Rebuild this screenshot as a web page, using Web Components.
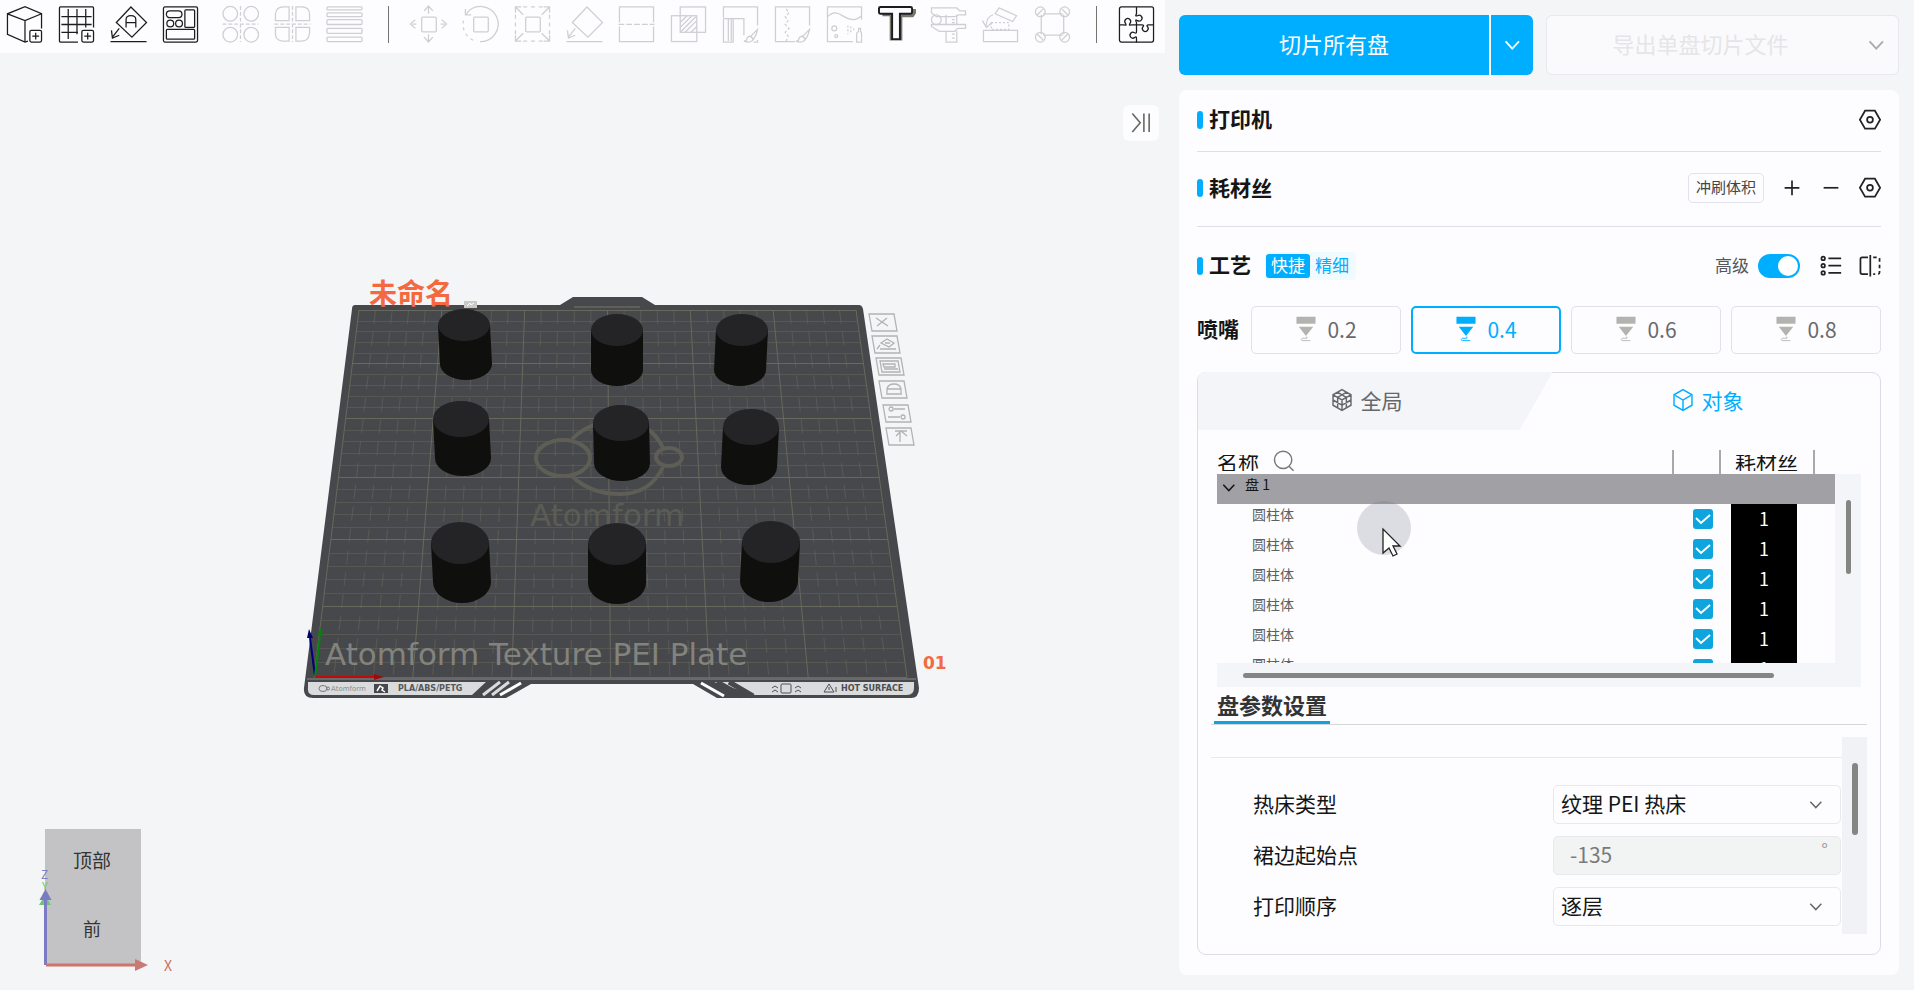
<!DOCTYPE html>
<html lang="zh-CN">
<head>
<meta charset="utf-8">
<title>切片</title>
<style>
html,body{margin:0;height:100%}
body{background:#f3f5f7;font-family:"Noto Sans CJK SC","Noto Sans",sans-serif;color:#151515;overflow:hidden}
</style>
</head>
<body>
<slicer-app></slicer-app>
<script>
const def=(name,html,init)=>{
  const t=document.createElement('template');
  t.innerHTML='<style>*{box-sizing:border-box}button,input,select{font:inherit;color:inherit;margin:0}button{cursor:pointer}</style>'+html;
  customElements.define(name,class extends HTMLElement{
    constructor(){super();this.attachShadow({mode:'open'}).append(t.content.cloneNode(true));}
    connectedCallback(){if(init&&!this.ready){this.ready=true;init.call(this,this.shadowRoot);}}
  });
};

const brush='<path d="M36 24l-7 7 3 3q3-4 4-10ZM28 31q-3 1-3 3t-3 2q5 2 8 0 2-1 1-3Z"/>';
const icons={
 cube:'<path d="M22 36 19 37 1 29V8L19 .8 36 8v15M1 8l18 7 17-7M19 15v22"/><rect x="24" y="25" width="12" height="12" rx="1.5"/><path d="M30 27.500v7M26.500 31h7"/>',
 grid:'<path d="M20 37H2a1 1 0 0 1-1-1V2a1 1 0 0 1 1-1h33a1 1 0 0 1 1 1v20M10 3v31M19 3v26M28 3v19M3 11h31M3 19h31M3 27h17"/><rect x="24" y="25" width="12" height="12" rx="1.5"/><path d="M30 27.500v7M26.500 31h7"/>',
 orient:'<path d="M21 1 37 17 22 32 6 17ZM9 23 2 32M1 25l1 8 7-3M0 36.500h37"/><path d="M16 22v-8q0-4 5-4t5 4v8M16 17h10" />',
 arrange:'<rect x="1" y="1" width="35" height="36" rx="1.500"/><rect x="4" y="5" width="16" height="7" rx="3.500"/><rect x="23" y="4" width="10" height="18" rx="1"/><circle cx="8" cy="18" r="3.500"/><circle cx="17" cy="18" r="3.500"/><rect x="4" y="24" width="29" height="10" rx="1"/>',
 circles:'<circle cx="8" cy="8" r="7.500"/><circle cx="29.500" cy="8" r="7.500"/><circle cx="8" cy="29.500" r="7.500"/><circle cx="29.500" cy="29.500" r="7.500"/><path d="M18.500 0v37M0 18.500h37" stroke-dasharray="4 2"/>',
 quads:'<path d="M1 15V8q1-7 8-7h6v14ZM22 1h6q8 0 8 8v6H22ZM1 22h14v14H8q-7-1-7-7ZM22 22h14v6q-1 8-8 8h-6Z"/><path d="M18.500 0v37M0 18.500h37" stroke-dasharray="4 2"/>',
 layers:'<rect x=".5" y="1" width="36" height="3" rx="1"/><rect x=".5" y="7" width="36" height="4" rx="1"/><rect x=".5" y="14" width="36" height="5" rx="1"/><rect x=".5" y="23" width="36" height="5" rx="1"/><rect x=".5" y="32" width="36" height="4.500" rx="1"/>',
 move:'<rect x="11.500" y="11.500" width="15" height="15" rx="1"/><path d="M18.500 1v7M14 5l4.500-5L23 5M18.500 29v7M14 32l4.500 5 4.500-5M5 14l-5 4.500L5 23M32 14l5 4.500-5 4.500M2 18.500h4M31 18.500h4"/>',
 rotate:'<rect x="11.500" y="11.500" width="15" height="15" rx="1"/><path d="M4 8a18 18 0 1 1 14 28.500M3 3v6h6"/><path d="M1 15a18 18 0 0 0 12 21" stroke-dasharray="3 4"/>',
 scale:'<rect x="11.500" y="11.500" width="15" height="15" rx="1"/><path d="M1 7V1h6M30 1h6v6M1 30v6h6M30 36h6v-6M1 1l8 8M36 1l-8 8M1 36l8-8M36 36l-8-8"/><path d="M9 1h20M9 36h20M1 9v20M36 9v20" stroke-dasharray="4 4"/>',
 lay:'<path d="M21 1 37 17 22 32 6 17ZM9 23 2 32M1 25l1 8 7-3M0 36.500h37"/>',
 cut:'<path d="M1 17V1h35v16M1 21v15.500h35V21"/><path d="M0 18.800h37" stroke-dasharray="6 2"/>',
 bool:'<rect x="10" y="1" width="26" height="26"/><rect x="1" y="10" width="26" height="26.500"/><path d="m10 17 7-7M10 22 22 10M10 27l16-16M15 27l12-12M21 27l6-6"/>',
 support:'<path d="M36 20V1H1v11M1 13h21v17M1 13v24h10V13M6 13v23M9 13v23M36 35v2h-4"/>'+brush,
 seam:'<path d="M36 20V1H1v35.500h20"/><path d="m12 3 3 4-4 4 3 4-3 4 4 4-4 4 3 4-2 5" stroke-dasharray="3 2"/>'+brush,
 paint:'<path d="M36 14V1H1v35.500h26M1 11c8-8 13-2 19 1s12 2 16-2"/><circle cx="8" cy="23" r="2.500"/><circle cx="10" cy="31" r="1.500"/><path d="M31 37V28l2-2v-3h2v3l1 2v9Z"/><path d="M22 20v9M25 21v7M28 23v3" stroke-dasharray="2 2"/>',
 text:'<path d="M4 9H13v25h10V10h12l2-3V3" stroke="#77776c" stroke-width="3" fill="none"/><path d="M2 1h31q1.500 0 1.500 1.500V6Q34.500 8 33 8H22v26H14V8H2Q.5 8 .5 6V2.500Q.5 1 2 1Z" fill="#fdfdff" stroke-width="2"/>',
 measure:'<path d="M1 2h26l3 3h6v4h-7l-4 2H6L1 7ZM1 19h35v4h-8l-3 3H9l-8-5ZM16 9v10M27 9v10M16 26v11h11V26M22 11h3M22 14h3M22 17h3M22 29h3M22 33h3"/><circle cx="6" cy="14" r="5"/>',
 assemble:'<path d="M1 25h35v11.500H1ZM17 2l18 8-4 6-18-8ZM11 9Q4 11 4 20M0 15l4 7 6-5"/><path d="M9 17h18v7H9Z" stroke-dasharray="2 2"/>',
 ears:'<path d="M7 9v20M30 9v20M9 8h20M9 30h20"/><circle cx="6" cy="6" r="5"/><circle cx="31" cy="6" r="5"/><circle cx="6" cy="32" r="5"/><circle cx="31" cy="32" r="5"/><path d="m3 9 6-6M28 3l6 6M3 29l6 6M28 35l6-6"/>',
 puzzle:'<rect x="1" y="1" width="35" height="36" rx="2"/><path d="M18.500 1v7q-2 3 1 2a3 3 0 1 1 0 5q-3-2-1 2v3M1 19.500h5q3 1 1-2a3 3 0 1 1 5 0q-2 3 1 2h11q3 0 1 2a3 3 0 1 0 5 0q-2-2 1-2h5M18.500 19.500v7q0 2-2 1a3 3 0 1 0 0 5q2-2 2 1v4"/>',
 chev:'<path d="m3 10 15 16 15-16" stroke-width="4"/>',
 hex:'<path d="M10 3h17l9 15.500L27 34H10L1 18.500Z" stroke-width="3"/><circle cx="18.500" cy="18.500" r="5" stroke-width="3"/>',
 plus:'<path d="M18.500 1v35M1 18.500h35" stroke-width="4"/>',
 minus:'<path d="M1 18.500h35" stroke-width="4"/>',
 list:'<g stroke-width="3"><circle cx="5" cy="6" r="3"/><circle cx="5" cy="18.500" r="3"/><circle cx="5" cy="31" r="3"/><path d="M14 6h22M14 18.500h22M14 31h22"/></g>',
 compare:'<g stroke-width="3"><path d="M15 4H5Q2 4 2 7v23q0 3 3 3h10M19 0v37"/><path d="M24 4h8q3 0 3 3v23q0 3-3 3h-8" stroke-dasharray="6 5"/></g>',
 boxes:'<path d="M18.500 1 34 10v18l-15.500 9L3 28V10ZM3 10l15.500 9L34 10M18.500 19v18M3 19l15.500 9L34 19M10.500 5.500 26 14.500V32M26.500 5.500 11 14.500V32" stroke-width="2.500"/>',
 box:'<path d="M18.500 1 34 10v18l-15.500 9L3 28V10ZM5 11l13.500 8L32 11M18.500 19v17" stroke-width="2.500"/>',
 search:'<circle cx="17" cy="17" r="15" stroke-width="2.500"/><path d="m27 28 8 8" stroke-width="2.500"/>',
 collapse:'<path d="m2 1 15 17.500L2 36M24 1v35M34 1v35" stroke-width="3"/>',
 nozzle:'<path d="M2-2h33v12H2ZM6 15h25L18.500 31Z" fill="currentColor" stroke="none"/><path d="M20 32v3h-8q-4 3 0 4h14" stroke-width="1.500"/>'
};
customElements.define('ui-icon',class extends HTMLElement{
  constructor(){super();this.attachShadow({mode:'open'});}
  connectedCallback(){
    const s=this.getAttribute('size')||37;
    this.shadowRoot.innerHTML=`<style>:host{display:block;width:${s}px;height:${s}px;flex:none}svg{display:block;overflow:visible}</style><svg width="${s}" height="${s}" viewBox="0 0 37 38" fill="none" stroke="currentColor" stroke-width="1.3" aria-hidden="true">${icons[this.getAttribute('name')]}</svg>`;
  }
});

def('tool-bar',`<style>
:host{display:flex;align-items:center;gap:15px;height:53px;padding:0 10px 4px 6px;background:#fdfdff;position:relative}
button{border:0;background:none;padding:0;width:37px;height:37px;color:#1c1d1f}
button:disabled{color:#cfcfd3;cursor:default}
i{width:1px;height:37px;background:#73736f;margin:0 6px 0 10px}
.g{margin-left:8px}
</style>`,function(r){
  [['cube','添加'],['grid','添加盘'],['orient','朝向'],['arrange','排列'],['circles','拆分对象',1,1],['quads','拆分零件',1],['layers','层高',1],0,['move','移动',1],['rotate','旋转',1],['scale','缩放',1],['lay','放平',1],['cut','剪切',1],['bool','布尔',1],['support','支撑',1],['seam','接缝',1],['paint','上色',1],['text','文字'],['measure','测量',1],['assemble','装配',1],['ears','耳',1],0,['puzzle','拼装']].forEach(x=>{
    if(!x){r.append(document.createElement('i'));return;}
    const b=document.createElement('button');b.type='button';b.setAttribute('aria-label',x[1]);b.disabled=!!x[2];if(x[3])b.className='g';
    b.innerHTML=`<ui-icon name="${x[0]}"></ui-icon>`;r.append(b);
  });
});

def('plate-scene',`<style>
:host{display:block}
svg{display:block;overflow:visible}
.w{font-family:"DejaVu Sans",sans-serif}
</style>
<svg width="1165" height="990" viewBox="0 0 1165 990" role="img">
<path d="M355 305H560L573 297H642L655 305H859Q862 305 863 309L919 688Q919 698 911 698H717L693 684H531L506 698H313Q303 698 304 688L352 309Q352 305 355 305Z" fill="#47484b"/>
<path d="M574 307h66" stroke="#77776a"/>
<g id="grid" fill="none" stroke="#6b6b5e"></g>
<g fill="none" stroke="#5e5e57" stroke-width="4"><ellipse cx="563" cy="458" rx="27" ry="18"/><ellipse cx="669" cy="457" rx="13" ry="9"/><path d="M572 439Q590 421 620 421T663 448M663 467Q650 494 620 494T572 476"/></g>
<text class="w" x="530" y="526" font-size="31" fill="#5c5c56">Atomform</text>
<text class="w" x="325" y="665" font-size="31" fill="#83837e">Atomform Texture PEI Plate</text>
<g id="cyl"></g>
<path d="M307 679H916" stroke="#8b8b87"/>
<path d="M308 682H486L472 695H314Q307 695 308 687ZM714 682H914V688Q914 695 907 695H755Z" fill="#d9dbdc"/>
<path d="M479 696 499 682M488 696 508 682M497 696 517 682M502 696 525 682" stroke="#47484b" stroke-width="3"/>
<path d="M483 695 500 682M492 695 509 682" stroke="#d9dbdc" stroke-width="3"/><path d="M500 695 521 683" stroke="#fff" stroke-width="3"/>
<path d="M717 682 742 696M729 682 753 696" stroke="#47484b" stroke-width="5"/><path d="M701 683 724 696" stroke="#fff" stroke-width="3"/>
<g fill="none" stroke="#77797a"><ellipse cx="323" cy="688.500" rx="4" ry="3"/><circle cx="328" cy="688.500" r="1.500"/></g>
<text class="w" x="331" y="691" font-size="7" fill="#8b8d8e">Atomform</text>
<path d="M374 684h14v9h-14Z" fill="#47484b"/><path d="m377 691 3-5 3 2-1 2 3 2" stroke="#fff" stroke-width="1.500" fill="none"/>
<text class="w" x="398" y="691" font-size="8" font-weight="700" fill="#56585a">PLA/ABS/PETG</text>
<g fill="none" stroke="#4e5052"><rect x="781" y="684" width="10" height="9" rx="1"/><path d="m772 688 3-2 3 2M772 692l3-2 3 2M795 688l3-2 3 2M795 692l3-2 3 2M824 692l5-8 5 8ZM829 687v3M836 687v5"/></g>
<text class="w" x="841" y="691" font-size="8" font-weight="700" fill="#4b4d4f">HOT SURFACE</text>
<g stroke-width="2"><path d="M315 676 310 638" stroke="#00007c"/><path d="M315 676 320 637" stroke="#00850a"/><path d="M315 677H375" stroke="#c20a0a"/></g>
<path d="m309 629 4 9h-6Z" fill="#00006a"/><path d="m321 627 2 9h-6Z" fill="#00850a"/><path d="m384 677-10-3v6Z" fill="#a00a0a"/>
<text x="369" y="304" font-size="28" font-weight="700" fill="#f4693f">未命名</text>
<path d="M464 301h13v7h-13Z" fill="#c9c9c6"/><path d="m467 306 3-3 1 2 3-2" stroke="#fff" fill="none"/>
<text class="w" x="923" y="669" font-size="17" font-weight="700" fill="#f4693f">01</text>
<g id="side" fill="none" stroke="#b2b2b4" stroke-width="1.300"></g>
<path d="M45 829H141V965H45Z" fill="#c3c3c6"/>
<text x="73" y="868" font-size="19" fill="#333">顶部</text>
<text x="83" y="936" font-size="18" fill="#333">前</text>
<path d="m45 895-6 10h12Z" fill="#6ec573"/>
<text x="42" y="890" font-size="11" fill="#6ec573">Y</text>
<text x="41" y="879" font-size="12" fill="#7f7fc4">Z</text>
<path d="M45.500 965V898" stroke="#7b7bc4" stroke-width="3"/><path d="m45.500 889-6 11h12Z" fill="#7b7bc4"/>
<path d="M46 965H136" stroke="#d0736b" stroke-width="3"/><path d="m148 965-13-6v12Z" fill="#ca7a74"/>
<text x="164" y="971" font-size="14" fill="#ca7068">X</text>
</svg>`,function(r){
  const ys=[310,321,331,342,353,363,374,385,396,407,418,430,441,453,465,477,489,502,514,527,539,553,566,579,593,606,620,634,648,662,677];
  let g='';
  ys.forEach((y,i)=>{const t=(y-310)/367;g+=`<path d="M${359-45*t} ${y}.5H${856+51*t}" opacity="${i%5?.45:.9}"/>`;});
  for(let i=0;i<=30;i++)g+=`<path d="M${359+i*497/30} 310L${314+i*593/30} 677" ${i%5?'opacity=".5" stroke-dasharray="14 8"':'opacity=".9"'}/>`;
  r.getElementById('grid').innerHTML=g;
  const c=[[464,325,26,16,466,381],[617,330,26,16,617,387],[742,330,26,16,740,387],[461,419,28,18,463,477],[621,423,28,18,622,482],[751,427,28,18,749,486],[460,543,29,21,462,604],[617,544,29,21,617,605],[771,542,29,21,769,603]];
  r.getElementById('cyl').innerHTML=c.map(([x,y,a,b,X,Y])=>`<path d="M${x-a} ${y}L${X-a} ${Y-b-1}A${a} ${b} 0 0 0 ${X+a} ${Y-b-1}L${x+a} ${y}Z" fill="#0f0f0e"/><ellipse cx="${x}" cy="${y}" rx="${a}" ry="${b}" fill="#242427"/>`).join('');
  const glyph=['m7 4 12 8M18 4 8 12','m5 13 3-4M8 13h16M9 7l6-4 7 4-5 4ZM13 7h5','M4 3h18l2 11H6ZM7 6h12v3H8ZM8 11h14','M7 13h16M8 12V8q1-5 7-5t7 5v4M8 8h14','M11 4h11M5 12h12M8 2a2 2 0 1 0 .1 4 2 2 0 1 0-.1-4M20 10a2 2 0 1 0 .1 4 2 2 0 1 0-.1-4','M9 3h12M14 3v11M15 3l-5 5M15 3l6 5'];
  r.getElementById('side').innerHTML=[[869,314],[872,336],[876,358],[879,381],[883,405],[886,428]].map(([x,y],i)=>`<path transform="translate(${x} ${y})" d="M0 0H25L28 17H3Z${glyph[i]}"/>`).join('');
});

def('slice-actions',`<style>
:host{display:grid;grid-template-columns:354fr 353fr;gap:13px;height:60px}
div{display:flex;border-radius:6px;overflow:hidden;font-size:22px}
button{border:0;background:#00aeff;color:#fff;padding:0;display:flex;align-items:center;justify-content:center}
button:first-child{flex:1;padding-bottom:4px}
button+button{width:44px;border-left:2px solid #fff}
.off{border:1px solid #e8e8ed;background:#fafafc}
.off button{background:none;color:#e5e5e8;border:0}
.off ui-icon{color:#aaaaad}
</style>
<div><button type="button">切片所有盘</button><button type="button" aria-label="更多切片"><ui-icon name="chev" size="17"></ui-icon></button></div>
<div class="off"><button type="button" disabled>导出单盘切片文件</button><button type="button" aria-label="更多导出"><ui-icon name="chev" size="17"></ui-icon></button></div>`);

def('panel-section',`<style>
:host{display:flex;align-items:center;height:75px;padding-bottom:2px;border-bottom:1px solid #dfdfe6;flex:none}
:host([compact]){height:62px}
:host([plain]){height:79px;border-bottom:0}
i{width:6px;height:18px;border-radius:3px;background:#00aeff;margin-right:6px}
h2{font-size:21px;line-height:28px;font-weight:700;margin:0;padding-bottom:3px}
.end{margin-left:auto;display:flex;align-items:center}
</style><i></i><h2></h2><slot></slot><div class="end"><slot name="end"></slot></div>`,function(r){r.querySelector('h2').textContent=this.getAttribute('heading');});

def('icon-button',`<style>:host{display:block}button{display:block;border:0;background:none;padding:0;color:#222}</style><button type="button"></button>`,function(r){
  const b=r.querySelector('button');b.setAttribute('aria-label',this.getAttribute('label'));b.innerHTML=`<ui-icon name="${this.getAttribute('name')}" size="${this.getAttribute('size')}"></ui-icon>`;});

def('mode-switch',`<style>:host{display:flex;margin-left:14px;background:#f0fbff;border-radius:4px;padding:2px 2px 2px 1px}
button{border:0;background:none;color:#00aeff;font-size:17px;line-height:22px;padding:0 5px 2px;border-radius:3px}
.on{background:#00aeff;color:#fff}</style><button type="button" class="on">快捷</button><button type="button">精细</button>`);

def('toggle-switch',`<style>:host{display:block;margin-right:1px}label{display:flex;align-items:center;gap:9px;font-size:17px;line-height:24px;color:#55565a}
span{padding-bottom:2px}
input{appearance:none;width:42px;height:24px;border-radius:12px;background:#00aeff;padding:2px;display:flex;justify-content:flex-end}
input::before{content:"";width:20px;height:20px;border-radius:50%;background:#fff}</style><label><span>高级</span><input type="checkbox" role="switch" checked></label>`);

def('nozzle-picker',`<style>
:host{display:grid;grid-template-columns:44px repeat(4,minmax(0,1fr));column-gap:10px;height:48px;align-items:stretch;flex:none}
b{font-size:21px;line-height:44px;white-space:nowrap}
button{border:1px solid #e1e1e7;border-radius:5px;background:none;font-size:21px;color:#68696d;display:flex;align-items:center;justify-content:center;gap:10px;padding:0 0 2px}
ui-icon{color:#b3b3af}
.on,.on ui-icon{color:#00aeff}.on{border:2px solid #00aeff}
</style><b>喷嘴</b>`,function(r){
  ['0.2','0.4','0.6','0.8'].forEach(v=>{const b=document.createElement('button');b.type='button';if(v=='0.4')b.className='on';b.innerHTML=`<ui-icon name="nozzle" size="22"></ui-icon>${v}`;r.append(b);});});

def('scope-tabs',`<style>
:host{display:grid;grid-template-columns:1fr 1fr;height:58px;position:relative;flex:none}
.bg{position:absolute;inset:0 48% 0 0;background:#f4f5f8;clip-path:polygon(0 0,100% 0,calc(100% - 33px) 100%,0 100%);border-radius:8px 0 0 0}
button{border:0;background:none;display:flex;align-items:center;justify-content:center;gap:8px;font-size:21px;color:#66676a;position:relative;padding:0 4px 3px 0}
.on{color:#00aeff}
</style><div class="bg"></div><button type="button"><ui-icon name="boxes" size="22"></ui-icon>全局</button><button type="button" class="on"><ui-icon name="box" size="22"></ui-icon>对象</button>`);

def('object-list',`<style>
:host{display:grid;grid-template-columns:1fr 26px;grid-template-rows:213px 24px;margin:20px 19px 0;flex:none}
.view{overflow:hidden}
table{border-collapse:separate;border-spacing:0;table-layout:fixed;width:100%}
tr{height:30px}thead tr{height:24px}
th,td{padding:0;text-align:left;vertical-align:top;font-weight:400}
th{border-right:2px solid #a9a9ac;font-size:21px}
th:last-child{border:0}
th div{display:flex;align-items:center;height:24px;gap:14px}
th span{height:16px;line-height:13px;overflow:hidden;margin-top:1px}
th ui-icon{color:#77787a;margin-top:-2px}
thead th:nth-child(3) div{padding-left:14px}
.plate{background:#a0a0a5}
.plate div{display:flex;gap:9px;padding:0 5px;font-size:14px;line-height:20px;height:30px}
.plate ui-icon{margin-top:7px}
.name{padding-left:35px;font-size:14px;line-height:20px;color:#5d5e60}
input{appearance:none;display:block;width:20px;height:20px;margin:5px 0 0 19px;border-radius:3px;background:#0ea5de url('data:image/svg+xml,<svg xmlns="http://www.w3.org/2000/svg" viewBox="0 0 20 20"><path d="m3 9 5 5 9-8" fill="none" stroke="white" stroke-width="2"/></svg>')}
.slot{margin:0 18px 0 10px;background:#000;color:#fff;text-align:center;font-size:18px;line-height:28px;height:30px}
.v{margin-top:24px;background:#f4f5f8;padding:26px 10px 0 11px}
.v i{display:block;height:74px;background:#858583;border-radius:3px}
.h{grid-column:1/3;background:#f4f5f8;padding:10px 87px 0 26px}
.h i{display:block;height:5px;background:#858583;border-radius:3px}
</style>
<div class="view"><table><colgroup><col><col style="width:47px"><col style="width:94px"><col style="width:20px"></colgroup>
<thead><tr><th><div><span>名称</span><ui-icon name="search" size="22"></ui-icon></div></th><th></th><th><div><span>耗材丝</span></div></th><th></th></tr></thead>
<tbody><tr class="plate"><td colspan="4"><div><ui-icon name="chev" size="14"></ui-icon>盘 1</div></td></tr></tbody></table></div>
<div class="v"><i></i></div><div class="h"><i></i></div>`,function(r){
  const b=r.querySelector('tbody');
  for(let i=0;i<6;i++)b.insertAdjacentHTML('beforeend','<tr><td class="name">圆柱体</td><td><input type="checkbox" checked aria-label="圆柱体"></td><td><div class="slot">1</div></td><td></td></tr>');
});

def('plate-settings',`<style>
:host{display:block;margin:0 13px}
h3{margin:0;display:flex;height:38px;border-bottom:1px solid #d6d6d6}
h3 span{margin-left:3px;padding:0 3px;font-size:22px;line-height:34px;font-weight:700;color:#323335;border-bottom:3px solid #0ea5de;height:37px}
.area{display:grid;grid-template-columns:1fr 25px;margin-top:12px}
.track{background:#f1f2f5;padding:26px 9px 0 10px}
.track i{display:block;height:72px;border-radius:3px;background:#858583}
form{padding-top:20px}
hr{margin:0 0 27px;border:0;border-top:1px solid #e8e8ef}
.row{display:grid;grid-template-columns:1fr 288px;align-items:center;margin:0 1px 12px 42px;height:39px;font-size:21px}
.row:last-child{margin-bottom:8px}
label{padding-bottom:4px}
.box{position:relative;height:39px;border:1px solid #e8e8ef;border-radius:5px;display:flex;align-items:center}
select,input{appearance:none;border:0;background:none;width:100%;height:100%;padding:0 7px 4px;font-size:21px;outline:0;color:#151515;opacity:1}
.box ui-icon{position:absolute;right:17px;color:#66676a}
.off{background:#f2f3f3}
input{padding:0 16px 4px;color:#7a7a7c}
.off span{position:absolute;right:12px;top:-1px;font-size:18px;color:#a0a0a2}
</style>
<h3><span>盘参数设置</span></h3>
<div class="area"><form><hr>
<div class="row"><label for="bed">热床类型</label><div class="box"><select id="bed"><option>纹理 PEI 热床</option></select><ui-icon name="chev" size="14"></ui-icon></div></div>
<div class="row"><label for="brim">裙边起始点</label><div class="box off"><input id="brim" value="-135" disabled><span>°</span></div></div>
<div class="row"><label for="order">打印顺序</label><div class="box"><select id="order"><option>逐层</option></select><ui-icon name="chev" size="14"></ui-icon></div></div>
</form><div class="track"><i></i></div></div>`);

def('mouse-pointer',`<style>:host{display:block;position:absolute;left:159px;top:128px;pointer-events:none}svg{display:block;overflow:visible}</style>
<svg width="54" height="54"><circle cx="27" cy="27" r="27" fill="#77778a" opacity=".24"/><path d="M26 28V52L32 47L36 55L40 53L36 45H43Z" fill="#fff" stroke="#222" stroke-width="1.300"/></svg>`);

def('slicer-app',`<style>
:host{display:grid;grid-template-columns:minmax(0,1fr) 749px;min-height:100vh}
.left{position:relative;overflow:hidden}
plate-scene{position:absolute;left:0;top:0}
.fold{position:absolute;right:6px;top:105px;width:36px;height:36px;border:0;border-radius:6px;background:#fdfdff;display:grid;place-items:center;color:#66675f;padding:0}
.right{padding:15px 15px 15px 14px;display:flex;flex-direction:column;gap:15px}
.card{flex:1;background:#fdfdff;border-radius:8px;padding:0 18px 20px;display:flex;flex-direction:column}
.flush{border:1px solid #e2e2ec;border-radius:5px;background:none;font-size:15px;line-height:26px;padding:0 7px 2px;color:#444548}
.params{position:relative;margin-top:18px;flex:1;border:1px solid #dcdce4;border-radius:9px}
.params scope-tabs{margin-top:-1px}
</style>
<div class="left"><plate-scene></plate-scene><tool-bar></tool-bar><button class="fold" type="button" aria-label="收起"><ui-icon name="collapse" size="20"></ui-icon></button></div>
<div class="right"><slice-actions></slice-actions>
<div class="card">
<panel-section heading="打印机" compact><icon-button slot="end" name="hex" size="22" label="打印机设置"></icon-button></panel-section>
<panel-section heading="耗材丝"><button class="flush" slot="end" type="button">冲刷体积</button><icon-button slot="end" name="plus" size="16" label="添加" style="margin-left:20px"></icon-button><icon-button slot="end" name="minus" size="16" label="移除" style="margin:0 20px 0 23px"></icon-button><icon-button slot="end" name="hex" size="22" label="耗材丝设置"></icon-button></panel-section>
<panel-section heading="工艺" plain><mode-switch></mode-switch><toggle-switch slot="end"></toggle-switch><icon-button slot="end" name="list" size="22" label="列表" style="margin:0 17px 0 19px"></icon-button><icon-button slot="end" name="compare" size="22" label="比较"></icon-button></panel-section>
<nozzle-picker></nozzle-picker>
<div class="params"><scope-tabs></scope-tabs><object-list></object-list><plate-settings></plate-settings><mouse-pointer></mouse-pointer></div>
</div></div>`);
</script>
</body>
</html>
